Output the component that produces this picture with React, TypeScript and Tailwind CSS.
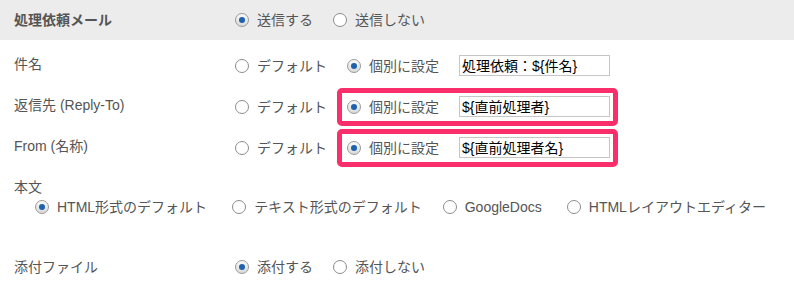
const font = "font-['Liberation_Sans','Noto_Sans_CJK_JP',sans-serif]";

function Radio({ checked, label }: { checked?: boolean; label: string }) {
  return (
    <label className="flex items-center gap-[8px] text-[14px] text-[#555]">
      {checked ? (
        <span className="flex h-[14px] w-[14px] items-center justify-center rounded-full border border-[#9a9a9a] bg-gradient-to-b from-[#fafafa] to-[#d9d9d9]">
          <span className="h-[6px] w-[6px] rounded-full bg-[#1d62ad]" />
        </span>
      ) : (
        <span className="h-[14px] w-[14px] rounded-full border border-[#8c8c8c] bg-white" />
      )}
      <span className="leading-[20px]">{label}</span>
    </label>
  );
}

function CustomField({ value, highlight }: { value: string; highlight?: boolean }) {
  return (
    <div
      className={`ml-[10px] flex h-[38px] items-center gap-[20px] rounded-[5px] border-[5px] pl-[5px] pr-[3px] ${
        highlight ? 'border-[#fb2e6c]' : 'border-transparent'
      }`}
    >
      <Radio checked label="個別に設定" />
      <div className="flex h-[21px] w-[151px] items-center border border-[#c6c6c6] bg-white pl-[2px] text-[14px] leading-none text-black">
        {value}
      </div>
    </div>
  );
}

function Row({ label, value, highlight }: { label: string; value: string; highlight?: boolean }) {
  return (
    <div className="flex h-[41px] items-center">
      <div className="w-[235px] pb-[3px] pl-[14px] text-[14px] text-[#555]">{label}</div>
      <div className="flex items-center">
        <Radio label="デフォルト" />
        <CustomField value={value} highlight={highlight} />
      </div>
    </div>
  );
}

export default function App() {
  return (
    <div className={`h-[295px] w-[794px] bg-white ${font}`}>
      {/* 処理依頼メール */}
      <div className="flex h-[40px] items-center bg-[#ececec]">
        <div className="w-[235px] pl-[14px] text-[14px] font-bold text-[#555]">処理依頼メール</div>
        <div className="flex items-center gap-[20px]">
          <Radio checked label="送信する" />
          <Radio label="送信しない" />
        </div>
      </div>

      <div className="pt-[5px]">
        <Row label="件名" value="処理依頼：${件名}" />
        <Row label="返信先 (Reply-To)" value="${直前処理者}" highlight />
        <Row label="From (名称)" value="${直前処理者名}" highlight />
      </div>

      {/* 本文 */}
      <div className="mt-[9px] pl-[14px]">
        <div className="text-[14px] leading-[20px] text-[#555]">本文</div>
        <div className="flex items-center pl-[21px]">
          <div className="mr-[25px]"><Radio checked label="HTML形式のデフォルト" /></div>
          <div className="mr-[21px]"><Radio label="テキスト形式のデフォルト" /></div>
          <div className="mr-[25px]"><Radio label="GoogleDocs" /></div>
          <Radio label="HTMLレイアウトエディター" />
        </div>
      </div>

      {/* 添付ファイル */}
      <div className="mt-[30px] flex h-[40px] items-center">
        <div className="w-[235px] pl-[14px] text-[14px] text-[#555]">添付ファイル</div>
        <div className="flex items-center gap-[20px]">
          <Radio checked label="添付する" />
          <Radio label="添付しない" />
        </div>
      </div>
    </div>
  );
}
